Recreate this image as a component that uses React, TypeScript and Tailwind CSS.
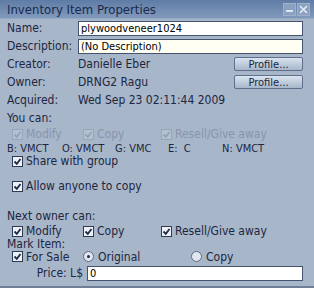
import React from 'react'

const font = { fontFamily: '"DejaVu Sans Condensed", "DejaVu Sans", sans-serif' }

function Check({ checked = true, disabled = false }: { checked?: boolean; disabled?: boolean }) {
    return (
        <span
            className={`inline-flex items-center justify-center w-[11px] h-[11px] border shrink-0 ${disabled
                ? 'border-[#97a5b9] bg-[#b3c0d1]'
                : 'border-[#2c3a55] bg-[#eef2f8]'
                }`}
        >
            {checked && (
                <svg viewBox="0 0 9 9" className="w-[9px] h-[9px]">
                    <path
                        d="M1.5 4.5 L3.8 6.8 L7.5 2"
                        fill="none"
                        stroke={disabled ? '#93a1b6' : '#1e2a44'}
                        strokeWidth="1.8"
                    />
                </svg>
            )}
        </span>
    )
}

function Radio({ on = false }: { on?: boolean }) {
    return (
        <span className="inline-flex items-center justify-center w-[11px] h-[11px] rounded-full border border-[#5b6a85] bg-[#dfe6f0] shrink-0">
            {on && <span className="w-[3px] h-[3px] rounded-full bg-[#1e2a44]" />}
        </span>
    )
}

function CheckLabel({ label, checked = true, disabled = false, className = '' }: { label: string; checked?: boolean; disabled?: boolean; className?: string }) {
    return (
        <span className={`flex items-center gap-[3px] ${className}`}>
            <Check checked={checked} disabled={disabled} />
            <span className={disabled ? 'text-[#8795ab]' : ''}>{label}</span>
        </span>
    )
}

function ProfileButton() {
    return (
        <button className="w-[69px] h-[14px] rounded-[2px] border border-[#5f6f8c] bg-gradient-to-b from-[#dbe4ef] to-[#a7b6ca] text-[11px] leading-none text-[#1c2640]">
            Profile...
        </button>
    )
}

export default function App() {
    return (
        <div
            className="w-[314px] h-[288px] bg-[#a8b6ca] text-[12px] leading-[13px] text-[#1c2640] flex flex-col overflow-hidden"
            style={font}
        >
            {/* title bar */}
            <div className="h-[19px] shrink-0 flex items-center justify-between pl-[7px] pr-[4px] bg-gradient-to-b from-[#5f7ca6] to-[#8199bb] border-b border-[#97a9c2]">
                <span className="text-[13px] text-[#1a2a4e]">Inventory Item Properties</span>
                <div className="flex gap-[1px]">
                    <span className="w-[13px] h-[13px] border border-[#9fb1c9] bg-[#8aa1c2] flex items-end justify-center pb-[3px]">
                        <span className="w-[7px] h-[2px] bg-[#dfe7f1]" />
                    </span>
                    <span className="w-[13px] h-[13px] border border-[#9fb1c9] bg-[#8aa1c2] flex items-center justify-center">
                        <svg viewBox="0 0 9 9" className="w-[9px] h-[9px]">
                            <path d="M1 1 L8 8 M8 1 L1 8" stroke="#e4ebf4" strokeWidth="1.6" />
                        </svg>
                    </span>
                </div>
            </div>

            <div className="flex flex-col pl-[7px] pr-[11px]">
                <div className="h-[18px] flex items-center">
                    <span className="w-[71px]">Name:</span>
                    <div className="flex-1 h-[15px] border border-[#45546e] bg-white flex items-center px-[2px] text-[11px] text-black">
                        plywoodveneer1024
                    </div>
                </div>
                <div className="h-[18px] flex items-center">
                    <span className="w-[71px]">Description:</span>
                    <div className="flex-1 h-[15px] border border-[#45546e] bg-[#fffff4] flex items-center px-[2px] text-[11px] text-black">
                        (No Description)
                    </div>
                </div>
                <div className="h-[18px] flex items-center">
                    <span className="w-[71px]">Creator:</span>
                    <span className="flex-1">Danielle Eber</span>
                    <ProfileButton />
                </div>
                <div className="h-[18px] flex items-center">
                    <span className="w-[71px]">Owner:</span>
                    <span className="flex-1">DRNG2 Ragu</span>
                    <ProfileButton />
                </div>
                <div className="h-[18px] flex items-center">
                    <span className="w-[71px]">Acquired:</span>
                    <span>Wed Sep 23 02:11:44 2009</span>
                </div>
                <div className="h-[18px] flex items-center">You can:</div>

                <div className="h-[14px] flex items-center pl-[5px]">
                    <CheckLabel label="Modify" disabled className="w-[71px]" />
                    <CheckLabel label="Copy" disabled className="w-[78px]" />
                    <CheckLabel label="Resell/Give away" disabled />
                </div>
                <div className="h-[14px] flex items-center text-[11px]">
                    <span className="w-[55px]">B: VMCT</span>
                    <span className="w-[53px]">O: VMCT</span>
                    <span className="w-[53px]">G: VMC</span>
                    <span className="w-[54px]">E:&nbsp; C</span>
                    <span>N: VMCT</span>
                </div>
                <div className="h-[13px] flex items-center pl-[5px]">
                    <CheckLabel label="Share with group" />
                </div>
                <div className="h-[12px]" />
                <div className="h-[13px] flex items-center pl-[5px]">
                    <CheckLabel label="Allow anyone to copy" />
                </div>
                <div className="h-[16px]" />
                <div className="h-[14px] flex items-center">Next owner can:</div>
                <div className="h-[16px] flex items-center pl-[5px]">
                    <CheckLabel label="Modify" className="w-[71px]" />
                    <CheckLabel label="Copy" className="w-[78px]" />
                    <CheckLabel label="Resell/Give away" />
                </div>
                <div className="h-[11px] flex items-center leading-[11px]">Mark Item:</div>
                <div className="h-[13px] flex items-center pl-[5px] leading-[12px]">
                    <CheckLabel label="For Sale" className="w-[71px]" />
                    <span className="flex items-center gap-[4px] w-[108px]">
                        <Radio on />
                        <span>Original</span>
                    </span>
                    <span className="flex items-center gap-[4px]">
                        <Radio />
                        <span>Copy</span>
                    </span>
                </div>
                <div className="h-[20px] flex items-center">
                    <span className="w-[80px] text-right pr-[4px]">Price: L$</span>
                    <div className="flex-1 h-[15px] border border-[#45546e] bg-white flex items-center px-[2px] text-[11px] text-black">
                        0
                    </div>
                </div>
            </div>
            <div className="flex-1 border-b-2 border-[#6f7f98]" />
        </div>
    )
}
